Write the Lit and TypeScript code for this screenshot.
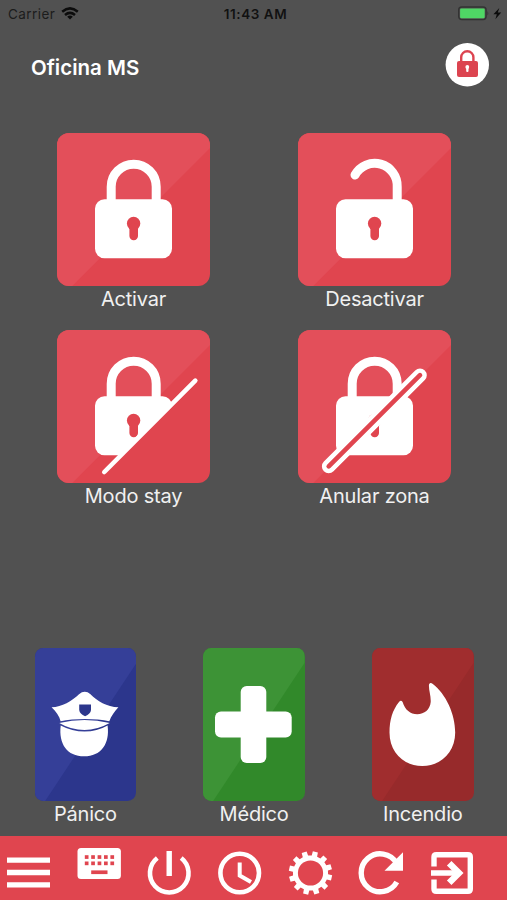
import { LitElement, html, svg, css } from "lit";
import { customElement, property } from "lit/decorators.js";

const shackle = svg`<path class="line" d="M54.2 70V53.7a22.5 22.5 0 0 1 45 0V70" />`;
const lockBody = svg`
  <rect class="fill" x="38" y="66.3" width="77" height="59" rx="9.5" />
  <circle class="hole" cx="76.6" cy="90.5" r="6.7" />
  <rect class="hole" x="72.4" y="90" width="8.6" height="17.3" rx="4.2" />`;

const glyphs: Record<string, unknown> = {
  locked: svg`${shackle}${lockBody}`,
  unlocked: svg`
    <path class="line round" d="M57 42A22.5 22.5 0 0 1 99.2 53.7V68" />${lockBody}`,
  stay: svg`
    <clipPath id="half"><path d="M0 0H153V36L36 153H0Z" /></clipPath>
    <g clip-path="url(#half)">${shackle}${lockBody}</g>
    <path class="line slash" d="M47.3 142L138.3 50.7" />`,
  bypass: svg`
    ${shackle}${lockBody}
    <path class="line capsule" d="M30.7 136.4L122 45.2" />
    <path class="slot" d="M30.7 136.4L122 45.2" />`,
  police: svg`
    <path class="fill" d="M16.6 59.2C27 59 37 53 44 46.2Q49.8 41.3 55.5 46.2C62 53 72 59 83.4 59.2C79.5 63.5 76 68 74.3 73.2C61 70.4 39 70.4 25.6 73.2C24.5 68 21 63.5 16.6 59.2Z" />
    <path class="fill" d="M24.3 75Q49.5 69.2 74.7 75Q62 82 49.5 82Q36 82 24.3 75Z" />
    <path class="fill" d="M25.7 77.5Q37 83.5 49.5 83.5Q62 83.5 72.6 77.5C75 96 66 108.3 49.2 108.3C32 108.3 23.5 96 25.7 77.5Z" />
    <path class="hole" d="M44.2 56.5H56V62Q55.500 66 50.1 68.2Q44.7 66 44.2 62Z" />`,
  cross: svg`
    <rect class="fill" x="37.7" y="38" width="25.6" height="77" rx="6" />
    <rect class="fill" x="12" y="63.6" width="76.7" height="25.8" rx="6" />`,
  flame: svg`
    <path class="fill" d="M57 36.5Q58.2 34 60.5 35.7C74 46 83.2 66 83.2 84.5C83.2 104 69 118 50.3 118C31.5 118 17.5 104 17.5 84.5C17.5 72 20.5 62 27 54Q29 51.5 30.6 54C33 62 38.5 66.2 45.2 66.2C52.5 66.2 58 61.5 58.7 54C59 47 56.5 42 57 36.5Z" />`,
};

@customElement("action-tile")
class ActionTile extends LitElement {
  @property() label = "";
  @property() glyph = "";
  @property({ reflect: true }) tone = "red";

  static styles = css`
    :host { display: flex; flex-direction: column; align-items: center; width: 153px;
      --base: #e0454f; --light: #e34f5a; }
    :host([tone="blue"]) { --base: #2c368c; --light: #353f98; }
    :host([tone="green"]) { --base: #31892a; --light: #3d9336; }
    :host([tone="maroon"]) { --base: #972a2b; --light: #a02d2e; }
    :host(:not([tone="red"])) { width: 101.5px; }
    .face { display: block; width: 100%; height: 153px; border-radius: 12px; background: var(--base); }
    :host(:not([tone="red"])) .face { border-radius: 8.5px; }
    .sheen { fill: var(--light); }
    .fill { fill: #fff; }
    .hole { fill: var(--base); }
    .line { fill: none; stroke: #fff; stroke-width: 9; }
    .round, .slash, .capsule, .slot { stroke-linecap: round; }
    .slash { stroke-width: 4.6; }
    .capsule { stroke-width: 13.6; }
    .slot { stroke: var(--base); stroke-width: 4.6; }
    .label { font: 20px/26px Inter, "Liberation Sans", sans-serif; color: #f0f0f0; white-space: nowrap; letter-spacing: -0.2px; }
  `;

  render() {
    const w = this.tone === "red" ? 153 : 101.5;
    return html`
      <svg class="face" viewBox="0 0 ${w} 153">
        <path class="sheen" d="M0 0H${w}V15L${w * 0.1} 153H0Z" />
        ${glyphs[this.glyph]}
      </svg>
      <span class="label">${this.label}</span>`;
  }
}

const gearOutline = (): string => {
  const points: string[] = [];
  const at = (deg: number, r: number) => {
    const a = ((deg - 90) * Math.PI) / 180;
    points.push(`${(21.5 + r * Math.cos(a)).toFixed(2)} ${(22 + r * Math.sin(a)).toFixed(2)}`);
  };
  for (let i = 0; i < 12; i++) {
    const c = 13 + i * 30;
    at(c - 9, 17.6);
    at(c - 6.8, 21.8);
    at(c + 6.8, 21.8);
    at(c + 9, 17.6);
  }
  return `M${points.join("L")}Z`;
};

const keys = [0, 1].flatMap((row) =>
  [0, 1, 2, 3, 4].map(
    (col) => svg`<rect class="key" x=${6.8 + col * 6.4} y=${7.2 + row * 6.3} width="3.7" height="3.7" />`
  )
);

const tools = [
  { name: "menu", art: svg`<path class="solid" d="M0 6.4H43V11.8H0ZM0 18.8H43V24.2H0ZM0 31.2H43V36.6H0Z" />` },
  { name: "keyboard", art: svg`<rect class="solid" x="-0.5" width="43.4" height="31" rx="3.5" />${keys}<rect class="key" x="13.2" y="22.4" width="16.3" height="3.7" />` },
  { name: "power", art: svg`<path class="stroke" d="M9.3 7A19.3 19.3 0 1 0 33.2 7" /><path class="solid" d="M18.5 0H23.9V25H18.5Z" />` },
  { name: "clock", art: svg`<circle class="stroke" cx="20.7" cy="22" r="19.3" /><path class="stroke thin" d="M20.7 11.5V24.5L32 31" />` },
  { name: "settings", art: svg`<path class="solid" d=${gearOutline()} /><circle class="key" cx="21.5" cy="22" r="12.6" />` },
  { name: "refresh", art: svg`<path class="stroke bold" d="M36.8 31A19 19 0 1 1 36.6 12.2" /><path class="solid" d="M43 1.2V19.8H24.5Z" />` },
  { name: "exit", art: svg`<path class="stroke bold" d="M3 15.5V6Q3 3.7 5.3 3.7H37Q39.3 3.7 39.3 6V38Q39.3 40.3 37 40.3H5.3Q3 40.3 3 38V28.5M0 22H26" /><path class="stroke thick" d="M18.2 12.2L28 22L18.2 31.8" />` },
];

@customElement("app-root")
class AppRoot extends LitElement {
  static styles = css`
    :host { display: flex; flex-direction: column; width: 507px; height: 900px; overflow: hidden;
      background: #515151; font-family: Inter, "Liberation Sans", sans-serif; }
    .status { display: grid; grid-template-columns: 1fr auto 1fr; align-items: center; height: 27px;
      padding: 0 4px 0 8px; font-size: 13.5px; color: #111; }
    .carrier { display: flex; align-items: center; gap: 6px; color: #1c1c1c; letter-spacing: 0.45px; }
    .time { font-weight: 600; letter-spacing: 0.55px; }
    .power { display: flex; justify-content: flex-end; }
    .header { display: flex; justify-content: space-between; height: 106px; box-sizing: border-box;
      padding: 16px 18px 0 31px; }
    .title { margin: 11px 0 0; font-size: 20.5px; line-height: 28px; font-weight: 600; letter-spacing: 0; color: #fff; }
    .badge { display: block; width: 44px; height: 44px; }
    .modes { display: grid; grid-template-columns: 153px 153px; column-gap: 88px; row-gap: 18px;
      padding-left: 57px; }
    .alarms { display: flex; gap: 67.2px; margin-top: auto; padding: 0 0 9px 34.7px; }
    .toolbar { display: flex; gap: 27.6px; box-sizing: border-box; height: 64px; padding: 15px 0 0 7px;
      background: #e0454f; }
    .tool { flex: none; display: block; width: 43px; height: 44px; overflow: visible; }
    .keyboard { margin-top: -3.5px; }
    .solid { fill: #fff; }
    .key { fill: #e0454f; }
    .stroke { fill: none; stroke: #fff; stroke-width: 4.6; }
    .thin { stroke-width: 4; }
    .bold { stroke-width: 5.4; }
    .thick { stroke-width: 6.4; }
    .disc { fill: #fff; }
    .red { fill: #dc4450; }
    .bow { fill: none; stroke: #dc4450; stroke-width: 2.4; }
    .ink { fill: #0c0c0c; }
    .waves { fill: none; stroke: #0c0c0c; stroke-width: 2.5; }
    .case { fill: none; stroke: #333; stroke-width: 1.4; }
    .charge { fill: #4fd765; }
    .nub { fill: #393939; }
  `;

  render() {
    return html`
      <div class="status">
        <div class="carrier">
          <span>Carrier</span>
          <svg width="18" height="13" viewBox="0 0 18 13">
            <path class="waves" d="M1.2 4.7Q9 -1.9 16.8 4.7M4 8Q9 3.8 14 8" />
            <path class="ink" d="M9 12.5L6.2 9.7Q9 7.5 11.8 9.7Z" />
          </svg>
        </div>
        <div class="time">11:43 AM</div>
        <div class="power">
          <svg width="45" height="15" viewBox="0 0 45 15">
            <rect class="case" x="0.7" y="1" width="27.4" height="12.6" rx="3" />
            <rect class="charge" x="2.1" y="2.4" width="24.6" height="9.8" rx="1.2" />
            <path class="nub" d="M29.3 5Q31.5 7.3 29.3 9.6Z" />
            <path class="ink" d="M41.3 2L35.4 8.2H38.8L37.4 13.2L43.2 6.6H39.8Z" />
          </svg>
        </div>
      </div>
      <div class="header">
        <h1 class="title">Oficina MS</h1>
        <svg class="badge" viewBox="0 0 44 44">
          <circle class="disc" cx="22.3" cy="21.8" r="21.7" />
          <path class="bow" d="M16.2 20V14.3A6.1 6.1 0 0 1 28.4 14.3V20" />
          <rect class="red" x="12" y="18" width="21" height="16" rx="2" />
          <circle class="disc" cx="22.3" cy="24" r="1.9" />
          <rect class="disc" x="21.2" y="24" width="2.3" height="5" rx="1" />
        </svg>
      </div>
      <div class="modes">
        <action-tile glyph="locked" label="Activar"></action-tile>
        <action-tile glyph="unlocked" label="Desactivar"></action-tile>
        <action-tile glyph="stay" label="Modo stay"></action-tile>
        <action-tile glyph="bypass" label="Anular zona"></action-tile>
      </div>
      <div class="alarms">
        <action-tile tone="blue" glyph="police" label="Pánico"></action-tile>
        <action-tile tone="green" glyph="cross" label="Médico"></action-tile>
        <action-tile tone="maroon" glyph="flame" label="Incendio"></action-tile>
      </div>
      <div class="toolbar">
        ${tools.map((t) => html`<svg class="tool ${t.name}" viewBox="0 0 43 44">${t.art}</svg>`)}
      </div>`;
  }
}
